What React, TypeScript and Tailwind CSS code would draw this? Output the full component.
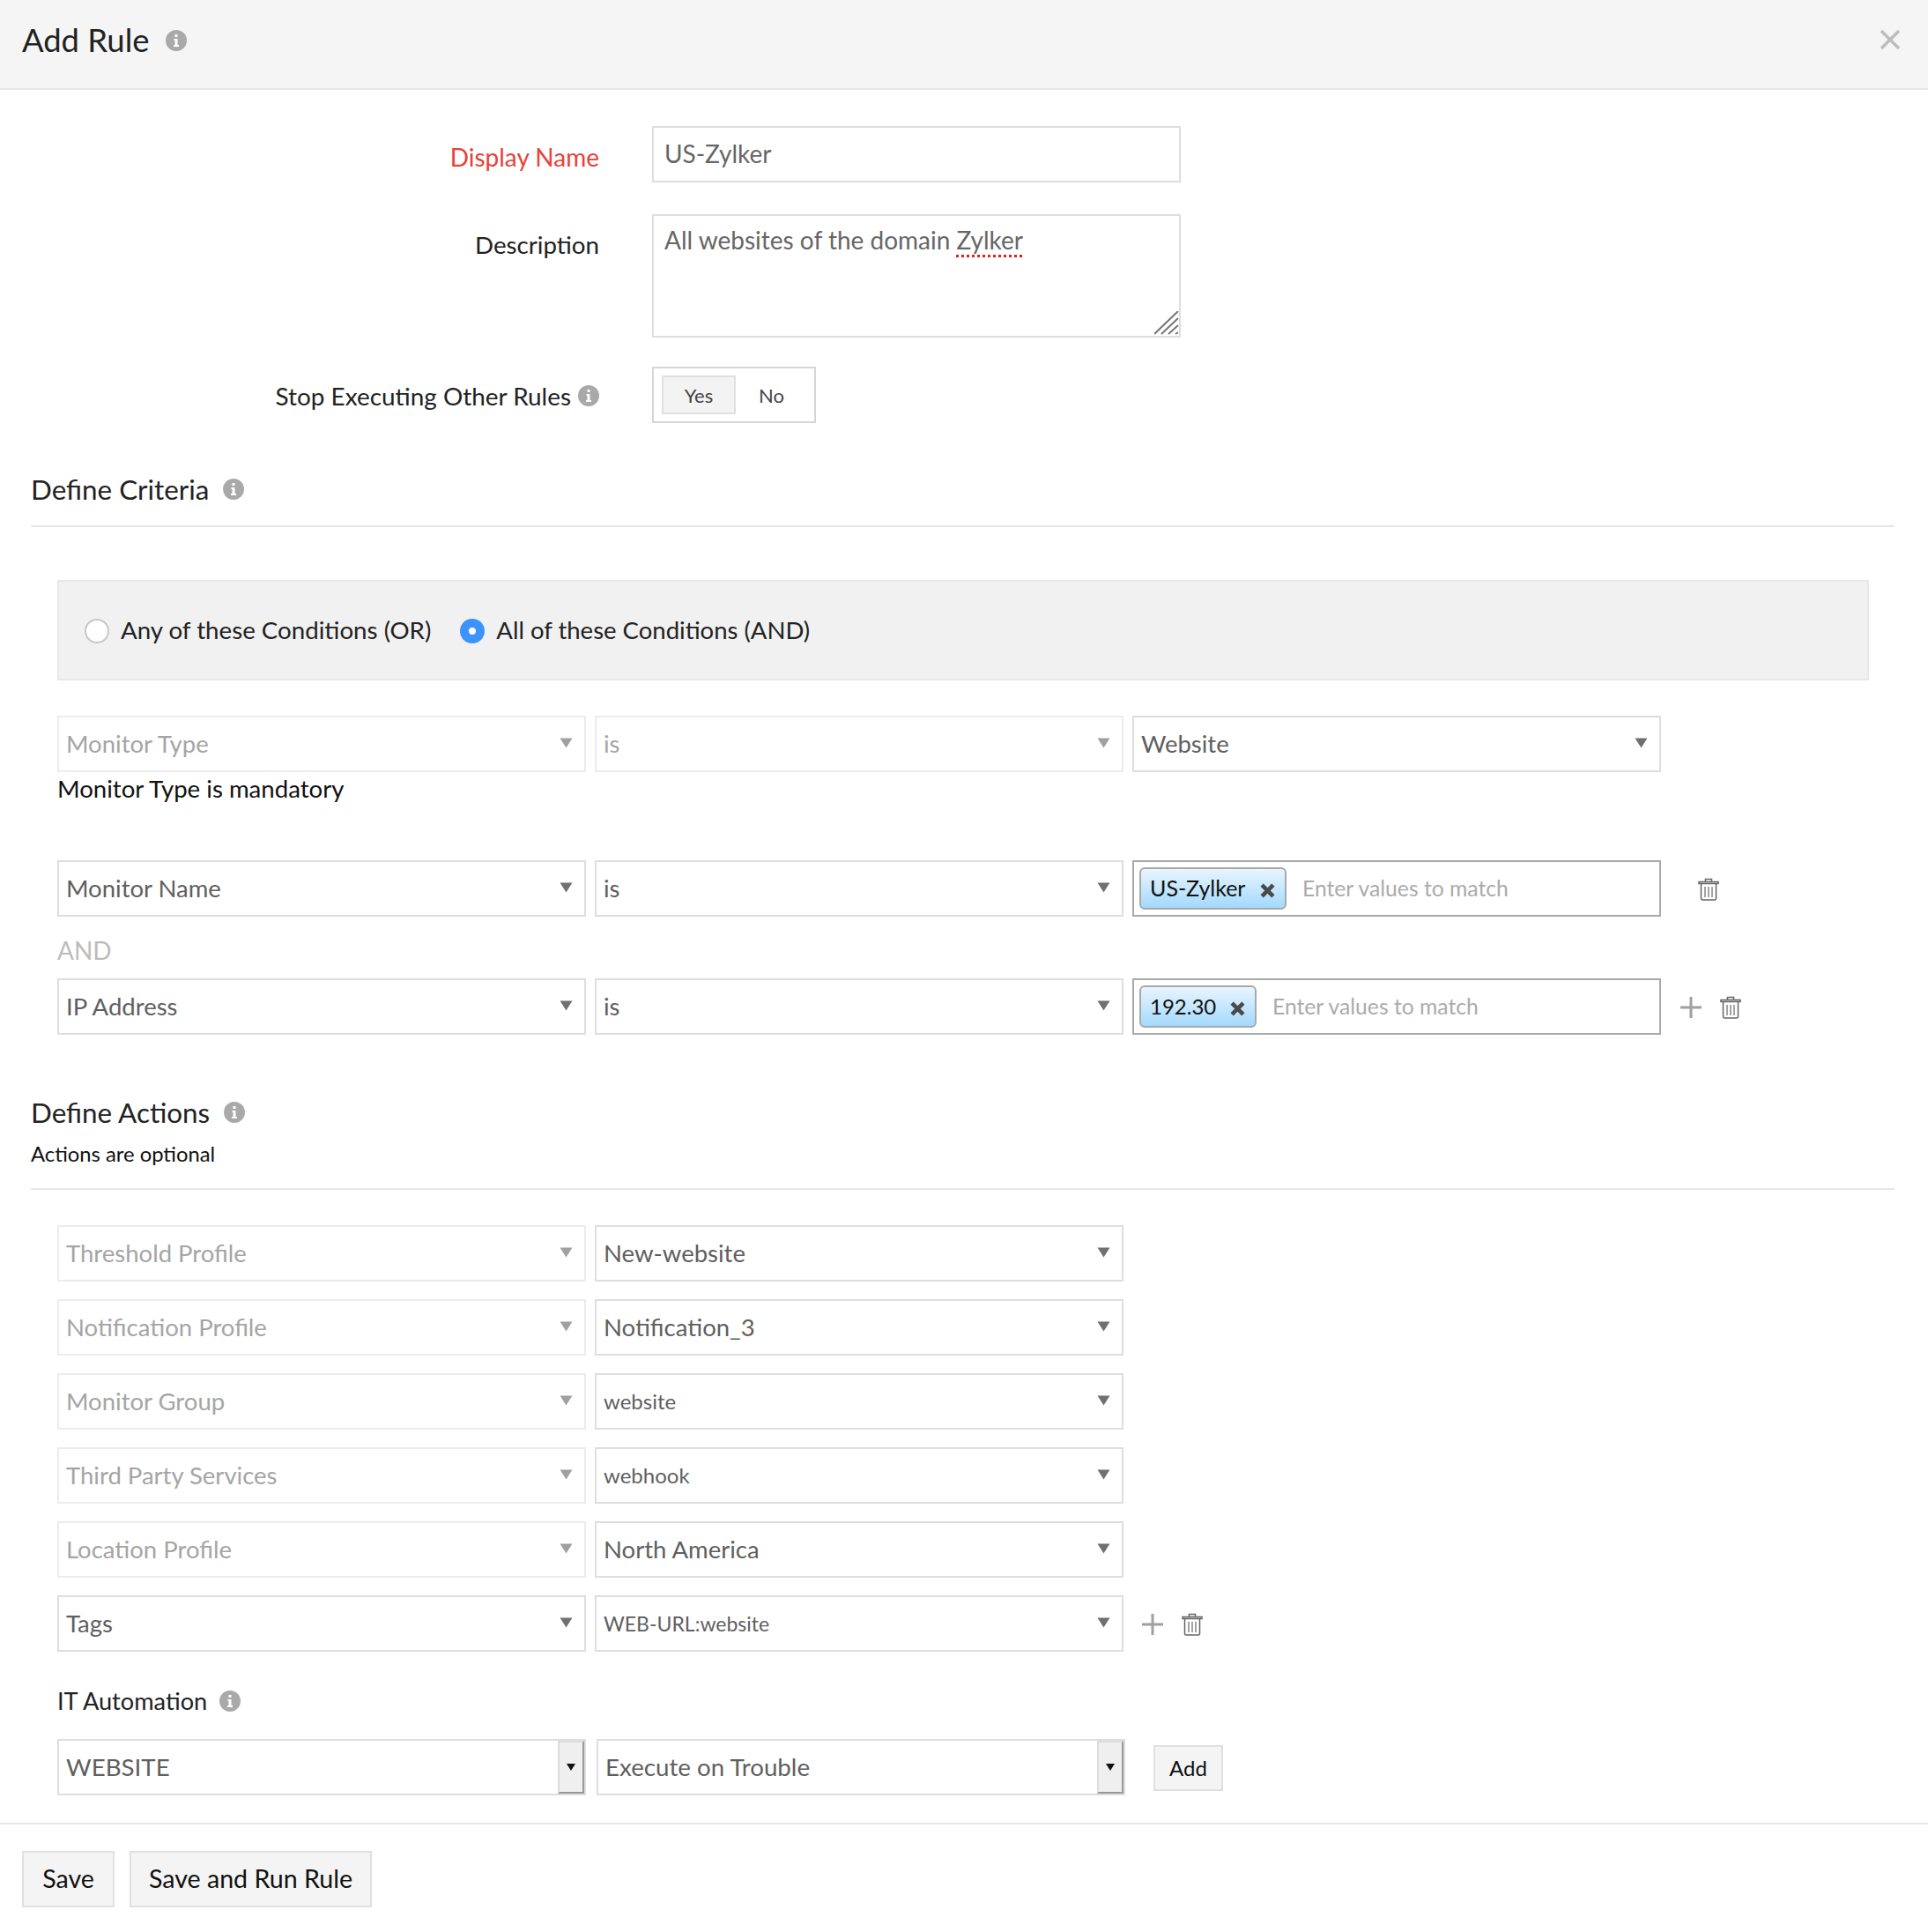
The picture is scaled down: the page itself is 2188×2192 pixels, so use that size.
import React from "react";

const InfoIcon = () => (
  <svg width="24" height="24" viewBox="0 0 24 24" className="shrink-0">
    <circle cx="12" cy="12" r="12" fill="#a9a9a9" />
    <path d="M10.5 5h3v3h-3zM9.5 10h4v7h1.5v2H9v-2h1.5v-5h-1z" fill="#fff" />
  </svg>
);

const Trash = () => (
  <svg width="24" height="26" viewBox="0 0 24 26" fill="none" stroke="#666" strokeWidth="1.5" className="shrink-0">
    <path d="M1 6.5h22v-2H1zM8.5 4.5V1.5h7v3" />
    <path d="M3.5 6.5v17a1.5 1.5 0 0 0 1.5 1.5h14a1.5 1.5 0 0 0 1.5-1.5v-17" />
    <path d="M8 10v12M12 10v12M16 10v12" strokeWidth="1.2" />
  </svg>
);

const Plus = () => (
  <svg width="26" height="26" viewBox="0 0 26 26" stroke="#a0a0a0" strokeWidth="3" className="shrink-0">
    <path d="M13 1v24M1 13h24" />
  </svg>
);

const TagX = () => (
  <svg width="17" height="17" viewBox="0 0 16 16" stroke="#4a4a4a" strokeWidth="4.4" className="mt-[4px] shrink-0">
    <path d="M2 2l12 12M14 2L2 14" />
  </svg>
);

const Arrow = ({ muted }: { muted?: boolean }) => (
  <svg width="15" height="12" viewBox="0 0 15 12" className="shrink-0">
    <path d="M0.5 0.5h14L7.5 11.5z" fill={muted ? "#a0a0a0" : "#707070"} />
  </svg>
);

type SelectProps = {
  label: string;
  muted?: boolean;
  size?: string;
};

const Select = ({ label, muted, size = "text-[27.5px]" }: SelectProps) => (
  <div
    className={`flex h-[64px] w-[600px] items-center justify-between border-2 pl-[8px] pr-[13px] ${
      muted ? "border-[#ececec] text-[#a5a5a5]" : "border-[#dedede] text-[#5f5f5f]"
    } ${size}`}
  >
    <span>{label}</span>
    <span className="pb-[2px]">
      <Arrow muted={muted} />
    </span>
  </div>
);

const NativeSelect = ({ label, width }: { label: string; width: string }) => (
  <div className={`flex h-[64px] items-stretch justify-between border-2 border-[#dedede] pl-[8px] text-[27.7px] text-[#5f5f5f] ${width}`}>
    <span className="self-center">{label}</span>
    <span className="flex w-[30px] items-center justify-center border-2 border-t-[#dcdcdc] border-r-[#9a9a9a] border-b-[#9a9a9a] border-l-[#dcdcdc] bg-[#efefef]">
      <svg width="10" height="8" viewBox="0 0 10 8">
        <path d="M0 0h10L5 8z" fill="#111" />
      </svg>
    </span>
  </div>
);

const TagInput = ({ tag, width, size }: { tag: string; width: string; size: string }) => (
  <div className="flex h-[64px] w-[600px] items-center border-2 border-[#a9a9a9] pl-[6px]">
    <div className={`flex h-[48px] items-center justify-between rounded-[6px] border-2 border-[#a9a9a9] bg-linear-to-b from-[#e8f5fe] to-[#a3d9fd] pl-[10px] pr-[11px] text-[#111] ${size} ${width}`}>
      <span>{tag}</span>
      <TagX />
    </div>
    <span className="ml-[18px] text-[24.7px] text-[#ababab]">Enter values to match</span>
  </div>
);

const SectionHead = ({ title }: { title: string }) => (
  <div className="flex h-[40px] items-center gap-[16px] text-[31.4px] leading-[40px] text-[#222]">
    <span>{title}</span>
    <InfoIcon />
  </div>
);

const actions = [
  { label: "Threshold Profile", value: "New-website" },
  { label: "Notification Profile", value: "Notification_3" },
  { label: "Monitor Group", value: "website", size: "text-[24px]" },
  { label: "Third Party Services", value: "webhook", size: "text-[24px]" },
  { label: "Location Profile", value: "North America" },
];

export default function App() {
  return (
    <div className="min-h-[2192px] w-full bg-white font-[family-name:Lato,sans-serif] text-[28px] text-[#222]">
      {/* Header */}
      <div className="flex h-[102px] items-center justify-between border-b-2 border-[#e6e6e6] bg-[#f5f5f5] pb-[10px] pl-[25px] pr-[31px]">
        <div className="flex items-center gap-[19px]">
          <h1 className="text-[36.4px] text-[#222]">Add Rule</h1>
          <span className="mt-[2px]">
            <InfoIcon />
          </span>
        </div>
        <svg width="24" height="24" viewBox="0 0 24 24" stroke="#bdbdbd" strokeWidth="3.5">
          <path d="M2 2l20 20M22 2L2 22" />
        </svg>
      </div>

      {/* Basic fields */}
      <div className="flex items-center pt-[41px]">
        <div className="w-[680px] pt-[6px] text-right text-[#e5433a]">Display Name</div>
        <div className="ml-[60px] flex h-[64px] w-[600px] items-center border-2 border-[#dedede] pb-[2px] pl-[12px] text-[#666]">
          US-Zylker
        </div>
      </div>
      <div className="mt-[36px] flex items-start">
        <div className="w-[680px] pt-[14px] text-right text-[27.7px]">Description</div>
        <div className="relative ml-[60px] h-[140px] w-[600px] border-2 border-[#dedede] pl-[12px] pt-[6px] text-[#666]">
          All websites of the domain{" "}
          <span className="underline decoration-[#e02020] decoration-dotted decoration-[3px] underline-offset-[6px]">Zylker</span>
          <svg width="28" height="28" viewBox="0 0 28 28" stroke="#777" strokeWidth="2" className="absolute bottom-0 right-0">
            <path d="M27 0L0 26M27 8L8 26M27 16L16 26M27 24l-3 2" />
          </svg>
        </div>
      </div>
      <div className="mt-[33px] flex items-center">
        <div className="flex w-[680px] items-center justify-end gap-[8px]">
          <span className="pt-[4px] text-[27.9px]">Stop Executing Other Rules</span>
          <span className="mt-[2px]">
            <InfoIcon />
          </span>
        </div>
        <div className="ml-[60px] flex h-[64px] w-[186px] items-center border-2 border-[#d6d6d6] pl-[9px] text-[22px] text-[#444]">
          <div className="flex h-[44px] w-[84px] items-center justify-center border-2 border-[#e0e0e0] bg-[#f3f3f3]">Yes</div>
          <div className="ml-[26px]">No</div>
        </div>
      </div>

      {/* Define Criteria */}
      <div className="mx-[35px] mt-[55px] w-[2115px] border-b-2 border-[#e6e6e6] pb-[21px]">
        <SectionHead title="Define Criteria" />
      </div>

      <div className="px-[65px]">
        <div className="mt-[60px] flex h-[114px] w-[2056px] items-center border-2 border-[#e8e8e8] bg-[#f1f1f1] pl-[29px] text-[27.7px]">
          <span className="mt-[2px] h-[28px] w-[28px] rounded-full border-2 border-[#c8c8c8] bg-white" />
          <span className="ml-[13px]">Any of these Conditions (OR)</span>
          <span className="ml-[33px] mt-[2px] flex h-[28px] w-[28px] items-center justify-center rounded-full bg-[#3b93fb]">
            <span className="h-[8px] w-[8px] rounded-full bg-white" />
          </span>
          <span className="ml-[13px] text-[27.5px]">All of these Conditions (AND)</span>
        </div>

        <div className="mt-[40px] flex gap-[10px]">
          <Select label="Monitor Type" muted />
          <Select label="is" muted />
          <Select label="Website" />
        </div>
        <div className="mt-[3px] h-[32px] text-[27.6px] leading-[32px] text-[#111]">Monitor Type is mandatory</div>

        <div className="mt-[65px] flex items-center gap-[10px]">
          <Select label="Monitor Name" />
          <Select label="is" />
          <TagInput tag="US-Zylker" width="w-[167px]" size="text-[25px]" />
          <span className="ml-[32px] mt-[2px]">
            <Trash />
          </span>
        </div>
        <div className="mt-[22px] h-[32px] leading-[32px] text-[#bcbcbc]">AND</div>
        <div className="mt-[16px] flex items-center gap-[10px]">
          <Select label="IP Address" />
          <Select label="is" />
          <TagInput tag="192.30" width="w-[133px]" size="text-[24px]" />
          <span className="ml-[11px] mt-[2px] flex items-center gap-[20px]">
            <Plus />
            <Trash />
          </span>
        </div>
      </div>

      {/* Define Actions */}
      <div className="mx-[35px] mt-[68px] w-[2115px] border-b-2 border-[#e6e6e6] pb-[25px]">
        <SectionHead title="Define Actions" />
        <div className="mt-[13px] h-[28px] text-[23.8px] leading-[28px] text-[#111]">Actions are optional</div>
      </div>

      <div className="flex flex-col gap-[20px] px-[65px] pt-[40px]">
        {actions.map((a) => (
          <div key={a.label} className="flex gap-[10px]">
            <Select label={a.label} muted />
            <Select label={a.value} size={a.size} />
          </div>
        ))}
        <div className="flex items-center gap-[10px]">
          <Select label="Tags" />
          <Select label="WEB-URL:website" size="text-[23px]" />
          <span className="ml-[10px] mt-[2px] flex items-center gap-[20px]">
            <Plus />
            <Trash />
          </span>
        </div>
      </div>

      <div className="px-[65px]">
        <div className="mt-[40px] flex h-[32px] items-center gap-[14px] text-[27.2px] text-[#222]">
          <span>IT Automation</span>
          <InfoIcon />
        </div>
        <div className="mt-[27px] flex items-center">
          <NativeSelect label="WEBSITE" width="w-[600px]" />
          <span className="ml-[12px]">
            <NativeSelect label="Execute on Trouble" width="w-[600px]" />
          </span>
          <button className="ml-[32px] mt-[2px] h-[52px] w-[79px] border-2 border-[#e0e0e0] bg-[#f4f4f4] text-[24px] text-[#111]">Add</button>
        </div>
      </div>

      {/* Footer */}
      <div className="mt-[31px] flex gap-[17px] border-t-2 border-[#e8e8e8] pl-[25px] pt-[30px]">
        <button className="h-[64px] w-[105px] border-2 border-[#e0e0e0] bg-[#f4f4f4] pb-[2px] text-[28.6px] text-[#111]">Save</button>
        <button className="h-[64px] w-[275px] border-2 border-[#e0e0e0] bg-[#f4f4f4] pb-[2px] text-[28.6px] text-[#111]">Save and Run Rule</button>
      </div>
    </div>
  );
}
